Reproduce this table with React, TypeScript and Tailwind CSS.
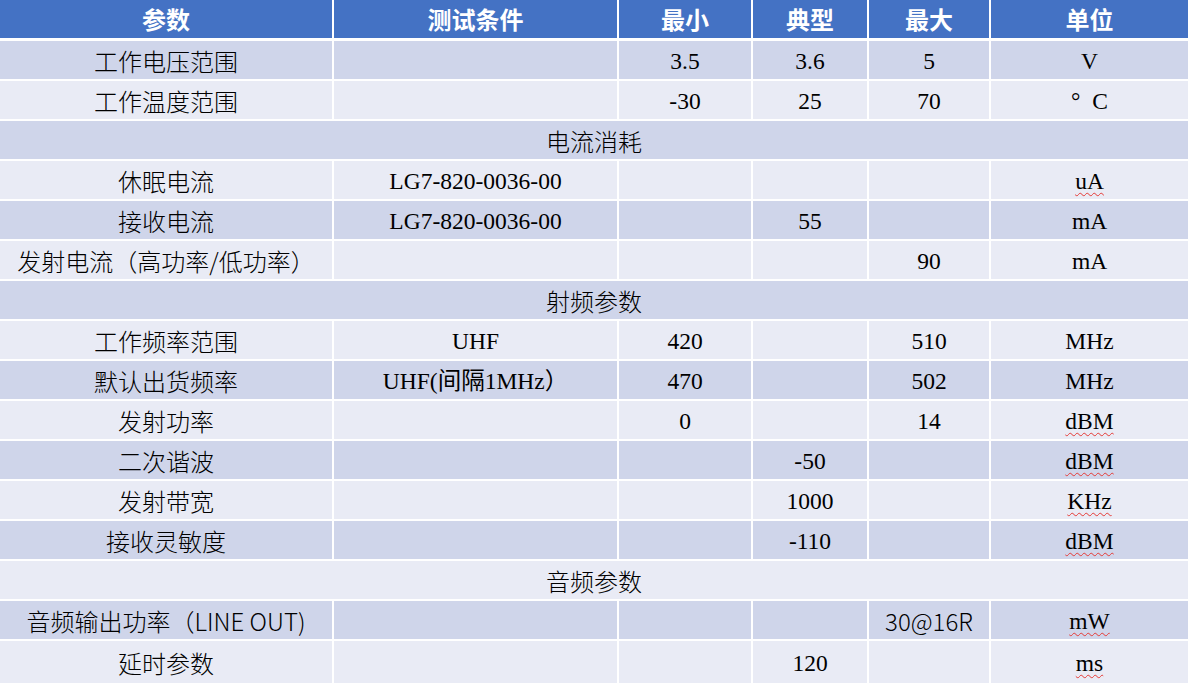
const cjk = "font-['Noto_Sans_CJK_SC',sans-serif]";
const serif = "font-['Liberation_Serif','Noto_Sans_CJK_SC',serif]";

type Unit = { text: string; wavy?: boolean };
type Row =
  | { kind: 'section'; title: string }
  | {
      kind: 'data';
      name: string;
      cond?: string;
      min?: string;
      typ?: string;
      max?: string;
      maxSans?: boolean;
      unit: Unit;
    };

const rows: Row[] = [
  { kind: 'data', name: '工作电压范围', min: '3.5', typ: '3.6', max: '5', unit: { text: 'V' } },
  { kind: 'data', name: '工作温度范围', min: '-30', typ: '25', max: '70', unit: { text: '°  C' } },
  { kind: 'section', title: '电流消耗' },
  { kind: 'data', name: '休眠电流', cond: 'LG7-820-0036-00', unit: { text: 'uA', wavy: true } },
  { kind: 'data', name: '接收电流', cond: 'LG7-820-0036-00', typ: '55', unit: { text: 'mA' } },
  { kind: 'data', name: '发射电流（高功率/低功率）', max: '90', unit: { text: 'mA' } },
  { kind: 'section', title: '射频参数' },
  { kind: 'data', name: '工作频率范围', cond: 'UHF', min: '420', max: '510', unit: { text: 'MHz' } },
  { kind: 'data', name: '默认出货频率', cond: 'UHF(间隔1MHz）', min: '470', max: '502', unit: { text: 'MHz' } },
  { kind: 'data', name: '发射功率', min: '0', max: '14', unit: { text: 'dBM', wavy: true } },
  { kind: 'data', name: '二次谐波', typ: '-50', unit: { text: 'dBM', wavy: true } },
  { kind: 'data', name: '发射带宽', typ: '1000', unit: { text: 'KHz', wavy: true } },
  { kind: 'data', name: '接收灵敏度', typ: '-110', unit: { text: 'dBM', wavy: true } },
  { kind: 'section', title: '音频参数' },
  { kind: 'data', name: '音频输出功率（LINE OUT)', max: '30@16R', maxSans: true, unit: { text: 'mW', wavy: true } },
  { kind: 'data', name: '延时参数', typ: '120', unit: { text: 'ms', wavy: true } },
];

const headers = ['参数', '测试条件', '最小', '典型', '最大', '单位'];

export default function App() {
  return (
    <div className="w-[1188px] h-[683px] overflow-hidden bg-white text-black flex flex-col">
      <div className="grid grid-cols-[332px_283px_132px_114px_120px_197px] gap-x-[2px]">
        {headers.map((h) => (
          <div
            key={h}
            className={`h-[38px] bg-[#4472c4] text-white font-bold text-[24px] leading-none flex items-center justify-center ${cjk}`}
          >
            {h}
          </div>
        ))}
      </div>
      <div className="mt-[3px] flex-1 flex flex-col gap-[2px]">
        {rows.map((r, i) => {
          const bg = i % 2 === 0 ? 'bg-[#cfd5ea]' : 'bg-[#e9ebf5]';
          const last = i === rows.length - 1;
          if (r.kind === 'section') {
            return (
              <div
                key={i}
                className={`h-[38px] ${bg} flex items-center justify-center text-[24px] font-light leading-none pt-[2px] ${cjk}`}
              >
                {r.title}
              </div>
            );
          }
          return (
            <div
              key={i}
              className={`grid grid-cols-[332px_283px_132px_114px_120px_197px] gap-x-[2px] ${
                last ? 'flex-1' : 'h-[38px]'
              }`}
            >
              <div className={`${bg} flex items-center justify-center text-[24px] font-light leading-none pt-[2px] whitespace-nowrap ${cjk}`}>
                {r.name}
              </div>
              <div className={`${bg} flex items-center justify-center text-[23.5px] leading-none pt-[3px] whitespace-nowrap ${serif}`}>
                {r.cond}
              </div>
              <div className={`${bg} flex items-center justify-center text-[23.5px] leading-none pt-[3px] ${serif}`}>
                {r.min}
              </div>
              <div className={`${bg} flex items-center justify-center text-[23.5px] leading-none pt-[3px] ${serif}`}>
                {r.typ}
              </div>
              <div
                className={`${bg} flex items-center justify-center leading-none ${
                  r.maxSans ? `text-[24px] font-light pt-[2px] ${cjk}` : `text-[23.5px] pt-[3px] ${serif}`
                }`}
              >
                {r.max}
              </div>
              <div className={`${bg} flex items-center justify-center text-[23.5px] leading-none pt-[3px] whitespace-pre ${serif}`}>
                <span
                  className={
                    r.unit.wavy
                      ? 'underline decoration-wavy decoration-[#e53935] decoration-1 underline-offset-[3px]'
                      : ''
                  }
                >
                  {r.unit.text}
                </span>
              </div>
            </div>
          );
        })}
      </div>
    </div>
  );
}
